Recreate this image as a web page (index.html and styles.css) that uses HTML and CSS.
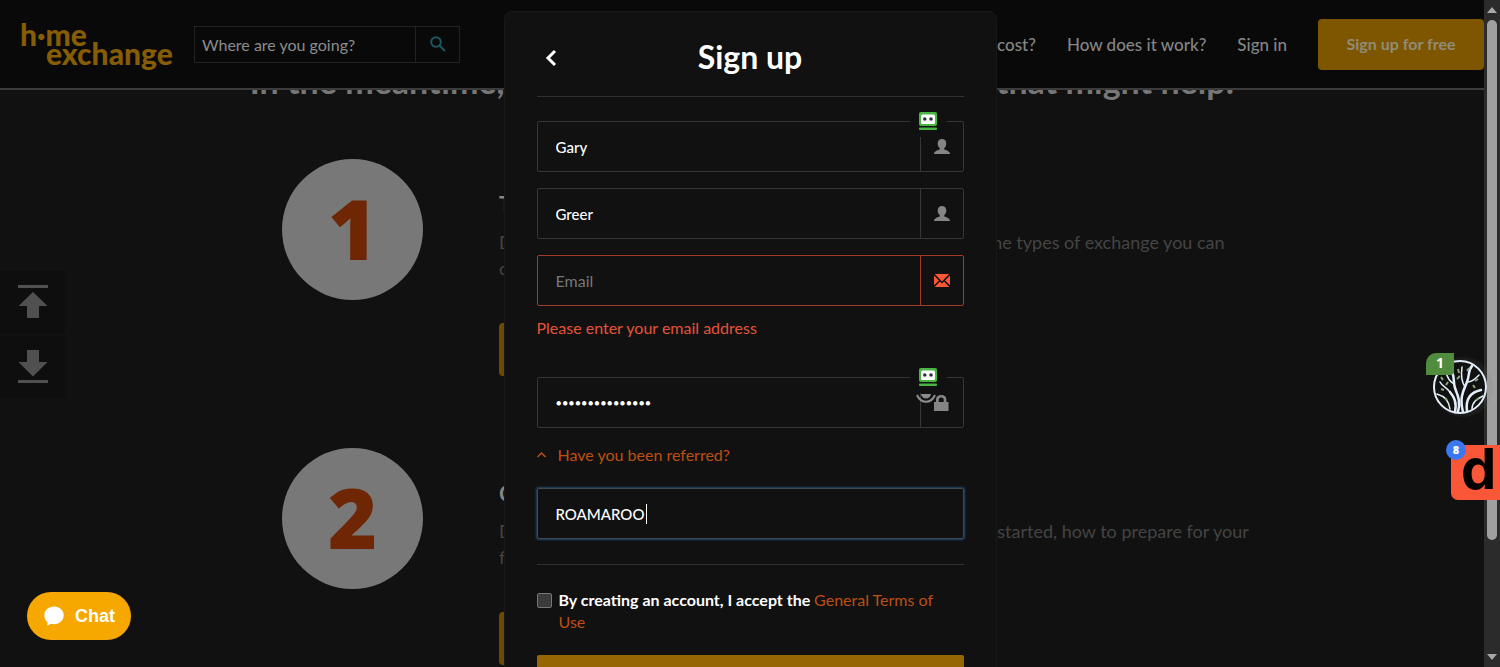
FILE: index.html
```html
<!DOCTYPE html>
<html lang="en">
<head>
<meta charset="utf-8">
<title>Sign up - HomeExchange</title>
<link rel="stylesheet" href="styles.css">
</head>
<body>
<svg class="sprite" aria-hidden="true">
  <symbol id="user" viewBox="0 0 16 16"><path d="M8 0c2.800 0 4.300 2 4.300 4.600 0 2-.8 3.600-2.100 4.600v1.300c2.500.9 5.800 1.800 5.800 4.500H0c0-2.700 3.300-3.600 5.800-4.500V9.200C4.500 8.200 3.700 6.600 3.700 4.600 3.700 2 5.200 0 8 0z"/></symbol>
  <symbol id="mail" viewBox="0 0 16 13"><path d="M.8 0h14.400L8 7.400zM0 1.500l5 5L0 11.200zM16 1.500v9.700l-5-4.700zM5.900 7.400L8 9.500l2.100-2.100 5.200 5.600H.7z"/></symbol>
  <symbol id="lock" viewBox="0 0 15 16"><path d="M0 7h2V4.500C2 1.600 4 0 7.200 0s5.200 1.600 5.200 4.500V7H14.500v9H0zm4.800 0h4.900V4.600c0-1.300-.9-2-2.500-2s-2.400.7-2.400 2z"/></symbol>
  <symbol id="robot" viewBox="0 0 18 18"><rect width="18" height="14" rx="2" fill="#4bb543"/><rect x="2" y="2.500" width="14" height="9.500" rx="1.500" fill="#fff"/><circle cx="5.800" cy="7" r="1.800" fill="#26333b"/><circle cx="12" cy="7" r="1.800" fill="#26333b"/><rect y="15.500" width="18" height="2.500" rx="1" fill="#4bb543"/></symbol>
</svg>

<div class="window">
  <div class="page">
    <header class="header">
      <a class="logo" href="#"><span>h·me</span><span class="logo-second">exchange</span></a>
      <form class="search">
        <input class="search-input" type="text" placeholder="Where are you going?" aria-label="Where are you going?">
        <button class="search-button" type="button" aria-label="Search"><svg width="16" height="16" viewBox="0 0 16 16" fill="none" stroke="currentColor" stroke-width="2"><circle cx="6" cy="6" r="4.800"/><path d="M9.500 9.500l5.500 5.500"/></svg></button>
      </form>
      <nav class="nav">
        <a href="#">How much does it cost?</a>
        <a href="#">How does it work?</a>
        <a href="#">Sign in</a>
        <button class="nav-cta" type="button">Sign up for free</button>
      </nav>
    </header>
    <main class="content">
      <h2 class="intro">In the meantime, here is some useful information that might help:</h2>
      <section class="step">
        <div class="step-number">1</div>
        <div class="step-body">
          <h3>The different types of exchange</h3>
          <p>Discover how HomeExchange works in every detail, and all of the types of exchange you can<br>choose from as a member.</p>
          <button class="step-button" type="button">Find out more</button>
        </div>
      </section>
      <section class="step">
        <div class="step-number">2</div>
        <div class="step-body">
          <h3>Getting ready for your exchange</h3>
          <p>Discover our guide and learn from members the top way to get started, how to prepare for your<br>first exchange and your guests.</p>
          <button class="step-button" type="button">Find out more</button>
        </div>
      </section>
    </main>
  </div>
  <div class="scrollbar" aria-hidden="true">
    <svg width="10" height="6" viewBox="0 0 10 6"><path d="M0 6l5-6 5 6z" fill="#a8a8a8"/></svg>
    <div class="track"><div class="thumb"></div></div>
    <svg width="10" height="6" viewBox="0 0 10 6"><path d="M0 0h10L5 6z" fill="#a8a8a8"/></svg>
  </div>
</div>

<div class="jump">
  <button type="button" aria-label="Scroll to top"><svg width="30" height="34" viewBox="0 0 30 34"><path d="M0 0h30v3H0zM15 7l14.500 14H21v12H9V21H.5z"/></svg></button>
  <button type="button" aria-label="Scroll to bottom"><svg width="30" height="34" viewBox="0 0 30 34"><path d="M0 30h30v3H0zM9 0h12v12h8.500L15 26.500.5 12H9z"/></svg></button>
</div>

<button class="chat" type="button"><svg width="20" height="20" viewBox="0 0 20 20"><path d="M10 .5c5.500 0 9.700 3.900 9.700 8.800s-4.200 8.900-9.700 8.900c-1 0-2-.2-2.900-.4-1 .9-2.400 1.500-4.300 1.500.8-1 .9-2 .8-3C1.600 14.700.3 12.300.3 9.300.3 4.400 4.500.5 10 .5z" fill="#fff"/></svg>Chat</button>

<div class="modal-layer">
  <form class="modal" role="dialog" aria-labelledby="modal-title" novalidate>
    <div class="modal-head">
      <button class="back" type="button" aria-label="Back"><svg width="12" height="18" viewBox="0 0 12 18" fill="none" stroke="#fff" stroke-width="3"><path d="M10 2L3 9l7 7"/></svg></button>
      <h1 id="modal-title">Sign up</h1>
    </div>
    <div class="fields">
      <div class="field">
        <input type="text" value="Gary" aria-label="First name">
        <span class="addon"><svg width="16" height="16"><use href="#user"/></svg></span>
        <span class="filler"><svg width="18" height="18"><use href="#robot"/></svg></span>
      </div>
      <div class="field">
        <input type="text" value="Greer" aria-label="Last name">
        <span class="addon"><svg width="16" height="16"><use href="#user"/></svg></span>
      </div>
      <div class="field invalid">
        <input type="email" placeholder="Email" aria-label="Email" aria-describedby="email-error">
        <span class="addon"><svg width="16" height="13"><use href="#mail"/></svg></span>
      </div>
    </div>
    <p class="error" id="email-error">Please enter your email address</p>
    <div class="field">
      <input class="password" type="password" value="exchangemyhome1" aria-label="Password">
      <span class="addon"><svg width="15" height="16"><use href="#lock"/></svg></span>
      <svg class="eye" width="20" height="10" viewBox="0 0 20 10"><path d="M1 1c4 9 14 9 18 0" fill="none" stroke="#8c8c8c" stroke-width="2"/><path d="M5 0h10c-1 6-9 6-10 0z" fill="#8c8c8c"/></svg>
      <span class="filler"><svg width="18" height="18"><use href="#robot"/></svg></span>
    </div>
    <a class="referral" href="#"><svg width="9" height="6" viewBox="0 0 9 6" fill="none" stroke="currentColor" stroke-width="1.500"><path d="M.5 5l4-4 4 4"/></svg>Have you been referred?</a>
    <div class="field focused">
      <input type="text" value="ROAMAROO" aria-label="Referral code">
      <span class="caret"></span>
    </div>
    <div class="terms">
      <input id="terms" type="checkbox">
      <label for="terms">By creating an account, I accept the <a href="#">General Terms of Use</a></label>
    </div>
    <button class="submit" type="submit" aria-label="Sign up"></button>
  </form>
</div>

<div class="tree">
  <svg width="54" height="54" viewBox="0 0 54 54" fill="none" stroke="#e4eefb" stroke-width="2"><circle cx="27" cy="27" r="26" fill="#111"/><g stroke-width="1.500" stroke-linecap="round"><path stroke-width="2.500" d="M22 52c2-10-1-15-5-20M25 52c3-12-1-18-3-24s0-12-4-18M30 52c-4-16 1-22 4-30s1-12 5-16M34 51c-2-14 5-19 14-21"/><path d="M17 32c-3-4-8-6-10-10M17 49c-1-9-6-13-13-15M39 49c0-7 5-10 11-13M32 27c-4-6-4-13-3-20M35 22c5 0 8-4 11-7M21 24c-5-3-7-7-8-12"/></g><path stroke="#8ba67c" d="M8 17l2 3M13 25l2-3M8 29l3 1M25 9l1 4M34 11l2-3M42 21l3-2M42 28l-2-3M12 38l2 2M43 40l3-2M24 19l3-3"/></svg>
  <span class="tree-badge">1</span>
</div>
<div class="dock"><span class="dock-mark">d</span><span class="dock-badge">8</span></div>
</body>
</html>
```
FILE: styles.css
```css
* { box-sizing: border-box; }

body {
  margin: 0;
  height: 100vh;
  overflow: hidden;
  position: relative;
  background: #111;
  color: #fff;
  font: 16px/22px Lato, sans-serif;
}

h1, h2, h3, p { margin: 0; }
a { color: inherit; text-decoration: none; }
button, input { font: inherit; color: inherit; margin: 0; }
button { border: 0; padding: 0; background: none; }
svg { display: block; flex: none; }
.sprite { position: absolute; width: 0; height: 0; }

.window {
  display: grid;
  grid-template-columns: minmax(0, 1fr) 16px;
  height: 100vh;
}
.page { display: flex; flex-direction: column; overflow: hidden; }

.header {
  display: flex;
  align-items: center;
  flex: none;
  height: 90px;
  padding-left: 20px;
  border-bottom: 2px solid #3c3c3c;
  background: #090909;
}
.logo {
  display: flex;
  flex-direction: column;
  width: 174px;
  color: #865c05;
  font-size: 30px;
  line-height: 19px;
  font-weight: 900;
}
.logo-second { padding-left: 26px; }

.search { display: flex; }
.search-input {
  width: 222px;
  height: 37px;
  padding: 0 7px;
  border: 1px solid #222;
  background: transparent;
}
.search-input::placeholder { color: #8c8c8c; opacity: 1; }
.search-button {
  display: grid;
  place-items: center;
  width: 44px;
  border: 1px solid #222;
  border-left: 0;
  color: #1c5862;
}

.nav {
  display: flex;
  align-items: center;
  gap: 31px;
  margin-left: auto;
  color: #858585;
  font-size: 17px;
  line-height: 24px;
  font-weight: 500;
}
.nav a { padding-top: 2px; }
.nav-cta {
  width: 166px;
  height: 51px;
  border-radius: 4px;
  background: #7e5600;
  color: #918b79;
  font-size: 16px;
  font-weight: 700;
}

.content { flex: 1; overflow: hidden; }
.intro {
  margin-top: -29px;
  color: #777;
  font-size: 34px;
  line-height: 40px;
  text-align: center;
  white-space: nowrap;
}
.step {
  display: flex;
  gap: 76px;
  height: 289px;
  padding: 58px 240px 0 282px;
}
.step-number {
  flex: none;
  width: 141px;
  height: 141px;
  border-radius: 50%;
  background: #787878;
  color: #6f2604;
  font: 800 84px/138px "Open Sans", sans-serif;
  text-align: center;
}
.step-body { padding-top: 30px; white-space: nowrap; }
.step-body h3 { color: #858585; font-size: 22px; line-height: 32px; }
.step-body p { padding-top: 8px; color: #444; font-size: 18px; line-height: 26px; }
.step-button {
  width: 180px;
  height: 53px;
  margin-top: 42px;
  border-radius: 4px;
  background: #6b4a02;
  color: #918b79;
}

.scrollbar {
  display: flex;
  flex-direction: column;
  align-items: center;
  gap: 7px;
  padding: 7px 0;
  background: #2b2b2b;
}
.track { flex: 1; }
.thumb { width: 10px; height: 83%; border-radius: 5px; background: #9f9f9f; }

.jump {
  position: absolute;
  top: 271px;
  left: 0;
  display: grid;
  gap: 3px;
}
.jump button {
  display: grid;
  place-items: center;
  width: 65px;
  height: 62px;
  background: #0e0e0e;
}
.jump path { fill: #505050; }

.chat {
  position: absolute;
  left: 27px;
  bottom: 27px;
  display: flex;
  align-items: center;
  gap: 11px;
  height: 48px;
  padding: 0 16px 0 17px;
  border-radius: 24px;
  background: #f7a800;
  font: bold 18px/22px "Liberation Sans", sans-serif;
}

.modal-layer {
  position: absolute;
  inset: 0;
  display: flex;
  justify-content: center;
  align-items: flex-start;
  padding-top: 11px;
  overflow: hidden;
  pointer-events: none;
}
.modal {
  display: flex;
  flex-direction: column;
  width: 493px;
  padding: 0 32px 32px;
  border: 1px solid #181818;
  border-radius: 8px;
  background: #111;
  pointer-events: auto;
}
.modal-head {
  display: grid;
  grid-template-columns: 28px 1fr 28px;
  align-items: center;
  height: 85px;
  padding-top: 8px;
  border-bottom: 1px solid #303030;
}
.modal-head h1 { padding-bottom: 3px; font-size: 32px; line-height: 40px; text-align: center; }
.back { justify-self: center; }

.fields { display: grid; gap: 16px; padding-top: 24px; }
.field {
  position: relative;
  display: flex;
  height: 51px;
  border: 1px solid #363636;
  border-radius: 2px;
}
.field input {
  flex: 1;
  min-width: 0;
  padding: 0 18px;
  border: 0;
  outline: 0;
  background: transparent;
  font-size: 15px;
  font-weight: 500;
}
.field input::placeholder { color: #777; opacity: 1; font-size: 16px; font-weight: 400; }
.field .password { font-size: 11px; }
.addon {
  display: grid;
  place-items: center;
  width: 43px;
  border-left: 1px solid #363636;
}
.addon svg { fill: #858585; }
.field.invalid, .invalid .addon { border-color: #a03c2a; }
.invalid .addon svg { fill: #ff5733; }
.filler {
  position: absolute;
  top: -17px;
  right: 16px;
  display: grid;
  place-items: center;
  width: 37px;
  height: 32px;
  background: #111;
}
.eye { position: absolute; top: 16px; right: 27px; }

.error { padding: 11px 0 38px; color: #e65338; font-size: 16px; }
.referral {
  display: flex;
  align-items: center;
  gap: 12px;
  padding: 16px 0 22px;
  color: #bd4f13;
}
.focused {
  border-color: #3d4b59;
  box-shadow: 0 0 2px 1px #234668;
}
.caret {
  position: absolute;
  top: 15px;
  left: 108px;
  width: 1px;
  height: 20px;
  background: #fff;
}
.terms {
  display: flex;
  gap: 7px;
  margin-top: 25px;
  padding: 24px 16px 22px 0;
  border-top: 1px solid #303030;
}
.terms input {
  appearance: none;
  flex: none;
  width: 15px;
  height: 15px;
  margin-top: 4px;
  border: 1px solid #777;
  border-radius: 2px;
  background: #3b3b3b;
}
.terms label { font-size: 16px; font-weight: 700; }
.terms a { color: #bd4f13; font-weight: 400; }
.submit {
  height: 51px;
  border-radius: 2px;
  background: #966604;
}

.tree {
  position: absolute;
  top: 357px;
  right: 7px;
  width: 60px;
  height: 60px;
  padding-top: 3px;
  border-radius: 50%;
  background: rgba(120, 120, 120, 0.1);
}
.tree-badge {
  position: absolute;
  top: -4px;
  left: -7px;
  width: 28px;
  height: 22px;
  border-radius: 10px 0 4px 0;
  background: #4f8c3e;
  font: 700 14px/20px "Open Sans", sans-serif;
  text-align: center;
}
.dock {
  position: absolute;
  top: 445px;
  right: 0;
  width: 49px;
  height: 55px;
  border-radius: 7px 0 0 7px;
  background: #f95738;
}
.dock-mark {
  display: block;
  padding-left: 10px;
  color: #000;
  font: 700 56px/48px Inter, sans-serif;
}
.dock-badge {
  position: absolute;
  top: -5px;
  left: -5px;
  width: 20px;
  height: 20px;
  border-radius: 50%;
  background: #3b78f0;
  font: 800 11px/20px "Open Sans", sans-serif;
  text-align: center;
}
```
